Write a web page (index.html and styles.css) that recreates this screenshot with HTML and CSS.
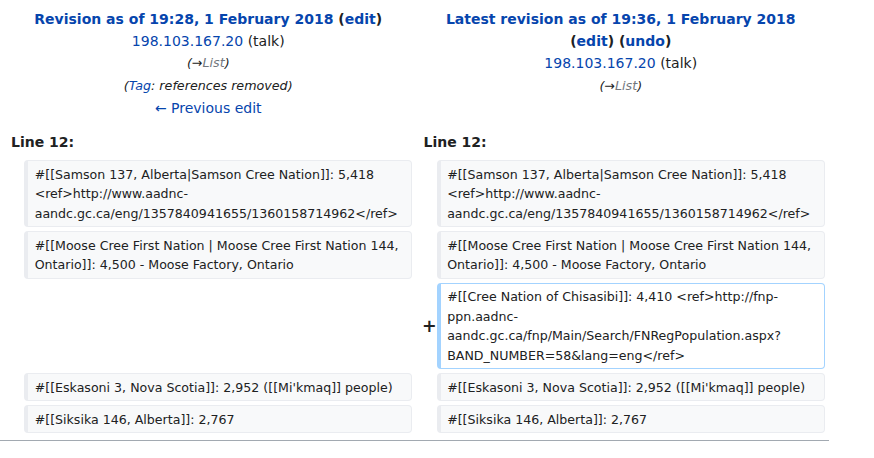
FILE: index.html
```html
<!DOCTYPE html>
<html>
<head>
<meta charset="utf-8">
<link rel="stylesheet" href="styles.css">
</head>
<body>
<div class="page">
<table class="diff">
  <colgroup>
    <col class="col-marker"><col class="col-content"><col class="col-marker"><col class="col-content">
  </colgroup>
  <tr class="diff-title">
    <td colspan="2" class="title">
      <div class="t-main"><a href="#" class="lnk">Revision as of 19:28, 1 February 2018</a> (<a href="#" class="lnk">edit</a>)</div>
      <div><a href="#" class="lnk">198.103.167.20</a> <span class="talk">(talk)</span></div>
      <div class="comment">(→<span class="auto">List</span>)</div>
      <div class="comment">(<a href="#" class="lnk">Tag</a>: references removed)</div>
      <div><a href="#" class="lnk">← Previous edit</a></div>
    </td>
    <td colspan="2" class="title">
      <div class="t-main"><a href="#" class="lnk">Latest revision as of 19:36, 1 February 2018</a> (<a href="#" class="lnk">edit</a>) (<a href="#" class="lnk">undo</a>)</div>
      <div><a href="#" class="lnk">198.103.167.20</a> <span class="talk">(talk)</span></div>
      <div class="comment">(→<span class="auto">List</span>)</div>
    </td>
  </tr>
  <tr>
    <td colspan="2" class="lineno">Line 12:</td>
    <td colspan="2" class="lineno">Line 12:</td>
  </tr>
  <tr>
    <td class="marker"></td>
    <td class="line context">#[[Samson 137, Alberta|Samson Cree Nation]]: 5,418 &lt;ref&gt;http://www.aadnc-aandc.gc.ca/eng/1357840941655/1360158714962&lt;/ref&gt;</td>
    <td class="marker"></td>
    <td class="line context">#[[Samson 137, Alberta|Samson Cree Nation]]: 5,418 &lt;ref&gt;http://www.aadnc-aandc.gc.ca/eng/1357840941655/1360158714962&lt;/ref&gt;</td>
  </tr>
  <tr>
    <td class="marker"></td>
    <td class="line context">#[[Moose Cree First Nation | Moose Cree First Nation 144, Ontario]]: 4,500 - Moose Factory, Ontario</td>
    <td class="marker"></td>
    <td class="line context">#[[Moose Cree First Nation | Moose Cree First Nation 144, Ontario]]: 4,500 - Moose Factory, Ontario</td>
  </tr>
  <tr>
    <td colspan="2" class="empty"></td>
    <td class="marker"><span class="plus">+</span></td>
    <td class="line added">#[[Cree Nation of Chisasibi]]: 4,410 &lt;ref&gt;http://fnp-ppn.aadnc-aandc.gc.ca/fnp/Main/Search/FNRegPopulation.aspx?BAND_NUMBER=58&amp;lang=eng&lt;/ref&gt;</td>
  </tr>
  <tr>
    <td class="marker"></td>
    <td class="line context">#[[Eskasoni 3, Nova Scotia]]: 2,952 ([[Mi'kmaq]] people)</td>
    <td class="marker"></td>
    <td class="line context">#[[Eskasoni 3, Nova Scotia]]: 2,952 ([[Mi'kmaq]] people)</td>
  </tr>
  <tr>
    <td class="marker"></td>
    <td class="line context">#[[Siksika 146, Alberta]]: 2,767</td>
    <td class="marker"></td>
    <td class="line context">#[[Siksika 146, Alberta]]: 2,767</td>
  </tr>
</table>
<div class="diff-hr"></div>
</div>
</body>
</html>
```

FILE: styles.css
```css
html, body {
  margin: 0;
  padding: 0;
  background: #ffffff;
}
body {
  font-family: "DejaVu Sans", sans-serif;
  font-size: 14px;
  line-height: 22.4px;
  color: #202122;
}
.page {
  width: 829px;
}
.diff {
  width: 100%;
  table-layout: fixed;
  border-collapse: separate;
  border-spacing: 4px;
  border: 0;
  margin: 0;
}
.col-marker { width: 2%; }
.col-content { width: 48%; }
.diff td {
  padding: 3.5px 7px;
}
.title {
  text-align: center;
  vertical-align: top;
}
.t-main {
  font-weight: bold;
}
.lnk {
  color: #0645ad;
  text-decoration: none;
}
.talk {
  color: #202122;
}
.comment {
  font-style: italic;
  font-size: 12.7px;
  line-height: 22.4px;
}
.auto {
  color: #72777d;
}
.lineno {
  font-weight: bold;
  text-align: left;
}
.diff td.marker {
  padding: 0;
  text-align: right;
  vertical-align: middle;
  font-weight: bold;
  font-size: 17.5px;
  line-height: 21px;
}
.plus {
  display: inline-block;
  margin-right: -4px;
}
.diff td.line {
  font-size: 12.6px;
  line-height: 19.5px;
  padding: 3.25px 6.5px;
  vertical-align: top;
  white-space: pre-wrap;
  word-wrap: break-word;
  border-style: solid;
  border-width: 1px 1px 1px 4px;
  border-radius: 4px;
  color: #202122;
}
.context {
  background: #f8f9fa;
  border-color: #eaecf0;
}
.added {
  background: #ffffff;
  border-color: #a3d3ff;
}
.diff-hr {
  margin-top: 3px;
  border-top: 1px solid #a2a9b1;
  height: 0;
}
```
